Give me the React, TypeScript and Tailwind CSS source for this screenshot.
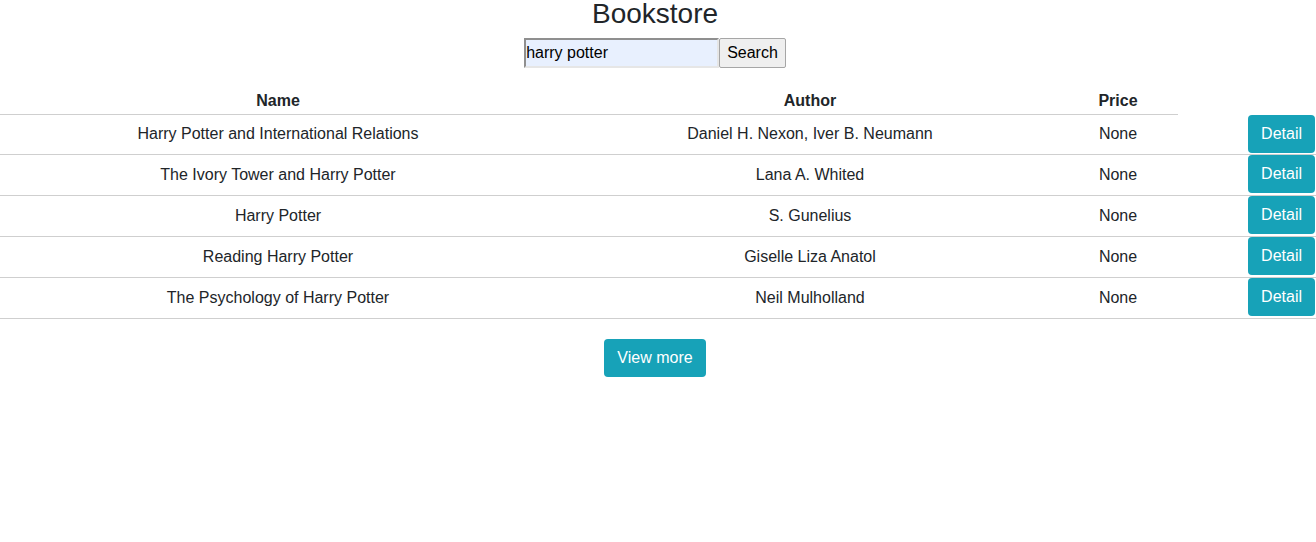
import React, { useState } from 'react';

type Book = {
  name: string;
  author: string;
  price: string;
};

const books: Book[] = [
  { name: 'Harry Potter and International Relations', author: 'Daniel H. Nexon, Iver B. Neumann', price: 'None' },
  { name: 'The Ivory Tower and Harry Potter', author: 'Lana A. Whited', price: 'None' },
  { name: 'Harry Potter', author: 'S. Gunelius', price: 'None' },
  { name: 'Reading Harry Potter', author: 'Giselle Liza Anatol', price: 'None' },
  { name: 'The Psychology of Harry Potter', author: 'Neil Mulholland', price: 'None' },
];

const cols = 'grid grid-cols-[556px_508px_114px_1fr]';

export default function App() {
  const [query, setQuery] = useState('harry potter');

  return (
    <div className="min-h-screen bg-white font-['Liberation_Sans',Arial,sans-serif] text-base text-[#212529]">
      <div className="flex flex-col items-center pr-[6px]">
        <h3 className="text-[28px] leading-[28px]">Bookstore</h3>
        <form className="mt-[10px] flex" onSubmit={(e) => e.preventDefault()}>
          <input
            value={query}
            onChange={(e) => setQuery(e.target.value)}
            className="h-[30px] w-[195px] border-2 border-t-[#8f8f8f] border-l-[#8f8f8f] border-r-[#e6e6e6] border-b-[#e6e6e6] bg-[#e8f0fe] px-0 text-base text-black outline-none"
          />
          <button className="h-[30px] rounded-[2px] border border-[#a6a6a6] bg-[#efefef] px-[7px] text-base text-black">
            Search
          </button>
        </form>
      </div>

      <div className="mt-[18px]">
        <div className={cols + ' h-[29px] font-bold'}>
          <div className="border-b border-[#cfcfcf] pt-[1px] text-center leading-[27px]">Name</div>
          <div className="border-b border-[#cfcfcf] pt-[1px] text-center leading-[27px]">Author</div>
          <div className="border-b border-[#cfcfcf] pr-[6px] pt-[1px] text-center leading-[27px]">Price</div>
          <div />
        </div>
        {books.map((b, i) => {
          const cell = 'flex items-center justify-center ' + (i === 0 ? 'pb-[2px]' : 'pb-0');
          return (
            <div
              key={b.name}
              className={cols + ' border-b border-[#cfcfcf] ' + (i === 0 ? 'h-[40px]' : 'h-[41px]')}
            >
              <div className={cell}>{b.name}</div>
              <div className={cell}>{b.author}</div>
              <div className={cell + ' pr-[6px]'}>{b.price}</div>
              <div className="flex items-start justify-end pr-[1px]">
                <button className="h-[38px] rounded-[4px] bg-[#17a2b8] px-[13px] text-base text-white">
                  Detail
                </button>
              </div>
            </div>
          );
        })}
        <div className="flex justify-center pr-[6px] pt-[20px]">
          <button className="h-[38px] rounded-[4px] bg-[#17a2b8] px-[13px] text-base text-white">
            View more
          </button>
        </div>
      </div>
    </div>
  );
}
